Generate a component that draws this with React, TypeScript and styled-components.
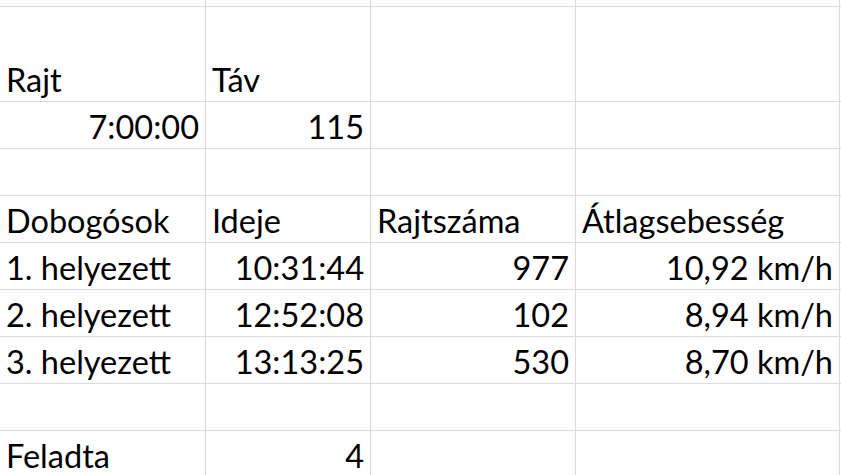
import React from "react";
import styled, { createGlobalStyle } from "styled-components";

const Global = createGlobalStyle`
  html, body { margin: 0; padding: 0; background: #fff; }
  body { overflow: hidden; }
`;

const Sheet = styled.div`
  display: grid;
  grid-template-columns: 206px 165px 205px 264px 1fr;
  grid-template-rows: 7px 95px;
  grid-auto-rows: 47px;
  width: 841px;
  height: 475px;
  overflow: hidden;
  font-family: "Lato", "Liberation Sans", sans-serif;
  font-size: 32.5px;
  color: #000;
`;

const Cell = styled.div<{ $right?: boolean }>`
  box-sizing: border-box;
  border-right: 1px solid #dadada;
  border-bottom: 1px solid #dadada;
  display: flex;
  align-items: flex-end;
  justify-content: ${(p) => (p.$right ? "flex-end" : "flex-start")};
  padding: 0 6px 3px 6px;
  line-height: 1.1;
  white-space: nowrap;
  overflow: visible;
`;

type C = { t?: string; r?: boolean };

const rows: C[][] = [
  [{}, {}, {}, {}, {}],
  [{ t: "Rajt" }, { t: "Táv" }, {}, {}, {}],
  [{ t: "7:00:00", r: true }, { t: "115", r: true }, {}, {}, {}],
  [{}, {}, {}, {}, {}],
  [{ t: "Dobogósok" }, { t: "Ideje" }, { t: "Rajtszáma" }, { t: "Átlagsebesség" }, {}],
  [{ t: "1. helyezett" }, { t: "10:31:44", r: true }, { t: "977", r: true }, { t: "10,92 km/h", r: true }, {}],
  [{ t: "2. helyezett" }, { t: "12:52:08", r: true }, { t: "102", r: true }, { t: "8,94 km/h", r: true }, {}],
  [{ t: "3. helyezett" }, { t: "13:13:25", r: true }, { t: "530", r: true }, { t: "8,70 km/h", r: true }, {}],
  [{}, {}, {}, {}, {}],
  [{ t: "Feladta" }, { t: "4", r: true }, {}, {}, {}],
];

export default function App() {
  return (
    <>
      <Global />
      <Sheet>
        {rows.map((row, i) =>
          row.map((c, j) => (
            <Cell key={`${i}-${j}`} $right={c.r}>
              {c.t}
            </Cell>
          ))
        )}
      </Sheet>
    </>
  );
}
